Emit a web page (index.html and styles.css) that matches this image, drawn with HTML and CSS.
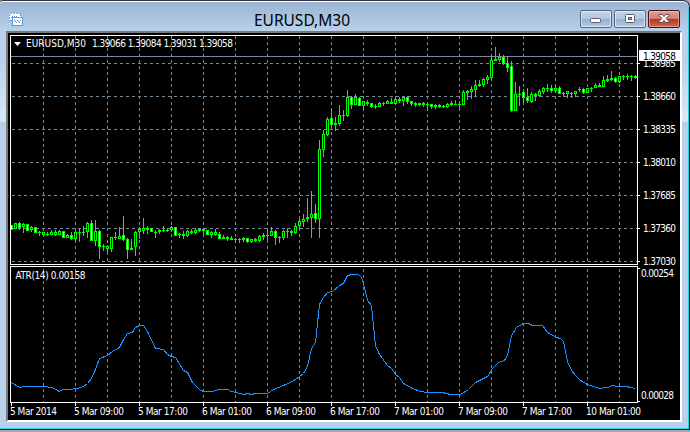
FILE: index.html
```html
<!DOCTYPE html>
<html lang="en">

<head>
    <meta charset="utf-8">
    <title>EURUSD,M30</title>
    <link rel="stylesheet" href="styles.css">
</head>

<body>

    <div class="window">

        <header class="titlebar">
            <svg class="app-icon" width="15" height="15" viewBox="0 0 15 15" shape-rendering="crispEdges">
                <rect x="0" y="1" width="12" height="8" fill="#fff"/>
                <path d="M1 1.5h11M0 2v7M.5 2v7M11.5 2v2M1 8.5h2" fill="none" stroke="#6fa5ee" stroke-dasharray="2 1"/>
                <path d="M2 5.5h1M3 4.5h1M5 4.5h1M7 4.5h1" stroke="#6a8fc4"/>
                <rect x="3.5" y="5.5" width="10" height="8" fill="#fff" stroke="#5a9bec"/>
                <path d="M5 8.5h1M6 9.5h1M7 10.5h1M8 8.5h1M9 9.5h1M10 10.5h1M11 8.5h1" stroke="#5a8bd0"/>
            </svg>
            <h1 class="title">EURUSD,M30</h1>
            <div class="buttons">
                <button class="btn" aria-label="Minimize">
                    <svg width="12" height="12"><rect x="0.5" y="5.5" width="10" height="4" rx="1" fill="#fff" stroke="#5b5c72"/></svg>
                </button>
                <button class="btn" aria-label="Maximize">
                    <svg width="12" height="12"><rect x="1.5" y="1.5" width="9" height="8" rx="1" fill="#fff" stroke="#5b5c72"/><rect x="4.5" y="4.5" width="3" height="2" fill="#8fb0d2" stroke="#5b5c72"/></svg>
                </button>
                <button class="btn btn-close" aria-label="Close">
                    <svg width="12" height="12"><path d="M1 1.5h3.2L6 3.6 7.8 1.5H11v1L8 5.5l3 3v1H7.8L6 7.4 4.2 9.5H1v-1l3-3-3-3z" fill="#fff" stroke="#5b4a5c"/></svg>
                </button>
            </div>
        </header>

        <main class="client">
            <svg id="chart" class="chart" width="672" height="387" viewBox="8 33 672 387"></svg>
        </main>

    </div>

    <script src="chart.js"></script>

</body>

</html>
```
FILE: styles.css
```css
* {
    margin: 0;
    padding: 0;
    box-sizing: border-box;
}

body {
    width: 690px;
    height: 432px;
    overflow: hidden;
    background-color: #a9a9a9;
}

.window {
    display: flex;
    flex-direction: column;
    width: 690px;
    height: 430px;
    border: 1px solid #1d1d1f;
    border-left: 0;
    border-top-color: #33323a;
    border-radius: 3px 7px 0 0;
    background: linear-gradient(to bottom, #98b4d2 0, #b9d1ea 30px, #b9d1ea 60px, #dce8f5 120px, #b9d1ea 121px);
    box-shadow: inset 0 1px 0 #fff, inset -1px -1px 0 #2fd0ec;
}

.titlebar {
    display: flex;
    align-items: flex-start;
    height: 30px;
    padding: 9px 9px 0 9px;
}

.app-icon {
    display: block;
    margin-top: 2px;
}

.title {
    flex: 1;
    font: 15.5px/20px "Noto Sans", sans-serif;
    text-align: center;
    color: #000;
}

.buttons {
    display: flex;
    gap: 2px;
}

.btn {
    display: flex;
    align-items: center;
    justify-content: center;
    width: 32px;
    height: 18px;
    border: 1px solid #54687f;
    border-radius: 2px;
    background: linear-gradient(to bottom, #c3d5e8 0, #b0c7df 50%, #94b0cd 50%, #b4cde6 100%);
    box-shadow: inset 0 0 0 1px rgba(255, 255, 255, 0.5);
}

.btn-close {
    border-color: #43141c;
    background: linear-gradient(to bottom, #e2a397 0, #d07a6a 50%, #b5341b 50%, #cf6a50 100%);
    box-shadow: inset 0 0 0 1px rgba(255, 200, 190, 0.5);
}

.client {
    width: 676px;
    height: 391px;
    margin-left: 6px;
    border: 2px solid;
    border-color: #777 #fff #fff #777;
    background-color: #000;
}

.chart {
    display: block;
    font-family: "DejaVu Sans Condensed", "DejaVu Sans", sans-serif;
    font-stretch: condensed;
    font-size: 10px;
    fill: #fff;
}

.grid {
    stroke: #778899;
    stroke-dasharray: 3 3;
}

.bid {
    stroke: #778899;
}

.frame {
    fill: none;
    stroke: #fff;
}

.up {
    fill: #000;
    stroke: #0f0;
}

.down {
    fill: #fff;
    stroke: #0f0;
}

.wick {
    stroke: #0f0;
}

.atr {
    fill: none;
    stroke: #1e90ff;
}

.bid-box {
    fill: #fff;
}

.bid-text {
    fill: #000;
}
```
FILE: chart.js
```javascript
var chart = document.getElementById("chart");

// one entry per bar: high, low, body top, body bottom, 1 = bearish
var bars = [
    [225,229,225,229,1],[223,228,223,228],[222,229,223,227,1],[223,232,224,226],[224,230,224,230,1],
    [226,231,227,229],[227,232,227,232,1],[231,235,232,232],[232,235,232,234],[232,235,234,234],
    [230,234,232,234],[230,235,232,234],[230,234,231,234],[231,237,231,237,1],[234,237,235,237],
    [232,239,235,238,1],[231,239,232,238],[229,241,232,232],[226,235,232,232],[222,237,223,231],
    [220,240,223,240,1],[220,245,231,240],[230,258,231,246,1],[244,250,246,246],[245,251,246,248],
    [237,251,237,248],[232,239,237,237],[227,238,236,238],[216,240,235,239,1],[238,258,239,249,1],
    [239,249,248,249],[231,255,232,246],[227,238,229,231],[218,233,228,230],[226,233,228,229],
    [228,231,228,231,1],[230,237,232,232],[229,233,230,231],[226,231,230,230],[228,231,230,230],
    [226,231,227,229],[227,235,227,235,1],[233,237,234,234],[231,238,234,235],[230,236,231,235],
    [229,233,231,232],[228,233,230,232],[228,231,229,230],[228,234,229,230],[230,234,230,234,1],
    [231,237,232,234],[229,235,232,234],[232,238,234,238,1],[235,238,237,238],[236,240,237,238],
    [236,239,238,239],[238,242,239,239],[238,242,239,239],[237,241,238,239],[238,242,238,241,1],
    [239,242,239,241],[238,241,239,240],[235,241,236,240],[233,239,235,236],[231,239,235,235],
    [227,235,231,235],[230,244,231,237,1],[236,242,237,237],[230,239,231,237],[228,237,231,231],
    [230,235,231,232],[223,233,226,232],[218,229,221,225],[214,226,219,221],[198,221,217,218],
    [191,237,214,217],[204,222,213,218,1],[140,237,149,218],[130,156,134,149],[117,135,119,134],
    [109,127,118,124,1],[117,130,123,124],[105,125,115,123],[110,120,115,115],[90,116,97,115],
    [96,108,97,104,1],[94,104,97,104],[97,105,98,105,1],[101,109,101,105],[100,105,102,103],
    [103,107,103,106,1],[104,108,106,106],[102,106,103,106],[102,105,103,103],[100,103,101,103],
    [98,103,102,103],[97,103,99,103],[97,102,99,100],[96,105,97,100],[96,103,97,101,1],
    [101,105,101,103,1],[102,106,103,104],[103,105,103,104],[102,106,103,104],[103,108,104,104],
    [104,108,104,106,1],[104,108,105,106],[104,107,105,106],[105,107,106,106],[103,107,104,106],
    [101,105,103,104],[100,104,104,104],[101,107,104,104],[90,104,92,104],[90,99,91,92],
    [86,98,89,91],[80,95,85,89],[80,86,84,85],[78,86,79,84],[75,83,77,79],
    [56,79,60,77],[47,60,59,60],[53,61,57,59],[55,64,57,63,1],[56,71,63,67,1],
    [61,111,66,110,1],[82,110,94,110],[86,105,94,94],[89,103,92,97,1],[88,102,97,100,1],
    [92,102,94,101],[93,100,94,95],[89,96,91,95],[87,93,88,91],[84,91,88,88],
    [85,92,88,90,1],[85,91,88,90],[86,93,88,93,1],[92,96,93,93],[91,97,91,93],
    [92,97,93,93],[91,96,91,93],[87,91,89,89],[88,93,89,92,1],[88,92,88,92],
    [87,91,88,88],[83,87,85,87],[83,86,85,86],[76,86,80,86],[75,81,79,80],
    [71,80,78,79],[77,82,78,81,1],[76,82,76,81],[75,79,76,76],[74,79,76,76],
    [75,80,76,76],[75,78,76,77]
];

var atr = "11,382 19,387 25,386 42,386 52,387 57,390 59,391 62,389 68,389 77,388 83,386 87,383 91,378 " +
    "95,369 99,358 107,355 112,351 119,347 123,339 127,333 132,332 135,327 139,325 143,325 147,331 " +
    "155,348 163,349 167,354 171,356 175,357 183,370 187,372 192,382 200,390 204,391 212,391 218,389 " +
    "228,389 230,391 236,392 243,394 247,393 251,394 255,393 267,393 273,389 283,385 292,381 299,376 " +
    "303,373 307,366 311,348 315,342 319,304 323,297 327,292 332,291 339,285 343,283 347,275 351,274 " +
    "358,274 361,277 363,283 367,300 371,305 375,345 379,354 387,365 391,368 395,374 399,377 403,383 " +
    "412,388 420,391 427,392 442,392 450,394 460,394 468,389 475,382 487,376 492,368 498,362 504,360 " +
    "507,355 511,335 516,327 523,323 528,323 532,325 542,325 547,332 556,337 560,338 563,341 567,361 " +
    "571,370 575,375 580,380 587,384 599,388 607,387 612,385 617,386 626,386 630,387 635,388";

var prices = ["1.38985", "1.38660", "1.38335", "1.38010", "1.37685", "1.37360", "1.37030"];
var times = ["5 Mar 2014", "5 Mar 09:00", "5 Mar 17:00", "6 Mar 01:00", "6 Mar 09:00", "6 Mar 17:00",
    "7 Mar 01:00", "7 Mar 09:00", "7 Mar 17:00", "10 Mar 01:00"];

function line(cls, x1, y1, x2, y2) {
    return '<path class="' + cls + '" d="M' + x1 + ' ' + y1 + 'L' + x2 + ' ' + y2 + '"/>';
}

function text(x, y, width, str, cls) {
    return '<text x="' + x + '" y="' + y + '" textLength="' + width + '" class="' + (cls || "") +
        '" xml:space="preserve">' + str + '</text>';
}

var out = '<g shape-rendering="crispEdges">';

for (var x = 43.5; x < 637; x += 32) {
    out += line("grid", x, 36, x, 264);
    out += line("grid", x, 269, x, 402);
}

for (var y = 63.5; y < 264; y += 33) {
    out += line("grid", 12, y, 637, y);
    out += line("frame", 638, y, 640, y);
}

out += line("bid", 11, 56.5, 637, 56.5);

bars.forEach(function (b, i) {
    var cx = 11 + i * 4;
    out += line("wick", cx + 0.5, b[0], cx + 0.5, b[1] + 1);
    if (b[2] === b[3]) {
        out += line("wick", cx - 1, b[2] + 0.5, cx + 2, b[2] + 0.5);
    } else {
        out += '<rect class="' + (b[4] ? "down" : "up") + '" x="' + (cx - 0.5) + '" y="' + (b[2] + 0.5) +
            '" width="2" height="' + (b[3] - b[2]) + '"/>';
    }
});

out += '<polyline class="atr" transform="translate(.5 .5)" points="' + atr + '"/>';
out += '<rect class="frame" x="10.5" y="35.5" width="627" height="229"/>';
out += '<rect class="frame" x="10.5" y="266.5" width="627" height="136"/>';
out += line("frame", 638, 268.5, 640, 268.5) + line("frame", 638, 401.5, 640, 401.5);

times.forEach(function (t, i) {
    out += line("frame", 11.5 + i * 64, 403, 11.5 + i * 64, 406);
});
out += '</g>';

prices.forEach(function (p, i) {
    out += text(643, 67 + i * 33, 33, p);
});
// current price covers the grid label behind it
out += '<rect class="bid-box" x="639" y="50" width="41" height="11"/>';
out += text(643, 59.5, 33, "1.39058", "bid-text");
out += text(641, 277, 33, "0.00254") + text(641, 399, 33, "0.00028");

times.forEach(function (t, i) {
    out += text(10 + i * 64, 415, i === 0 ? 47 : i === 9 ? 55 : 50, t);
});

out += '<path d="M14 42h7l-3.5 4z"/>';
out += text(26, 47, 60, "EURUSD,M30") + text(92, 47, 141, "1.39066 1.39084 1.39031 1.39058");
out += text(15.5, 279, 70, "ATR(14) 0.00158");

chart.innerHTML = out;
```
